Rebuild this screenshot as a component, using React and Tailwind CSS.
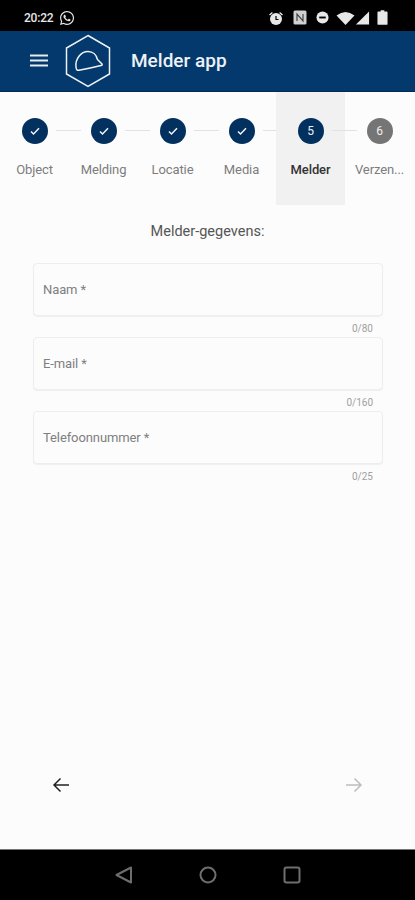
import React from "react";
import { FaWhatsapp } from "react-icons/fa";

function Check() {
  return (
    <svg width="12" height="12" viewBox="0 0 24 24" fill="none" stroke="#f2f5f8" strokeWidth="3">
      <path d="M4 13l5 5L20 6.5" />
    </svg>
  );
}

function Step({ label, state, num, active, last }) {
  return (
    <div className={`relative w-[69px] h-[113px] flex flex-col items-center pt-[26px] ${active ? "bg-[#f1f1f1]" : ""}`}>
      <div className={`w-[26px] h-[26px] rounded-full flex items-center justify-center text-[12px] text-[#f0f0f0] ${state === "todo" ? "bg-[#757575]" : "bg-[#03315f]"}`}>
        {state === "done" ? <Check /> : num}
      </div>
      {!last && <div className="absolute left-[56px] top-[38px] w-[25px] h-px bg-[#e2e2e2]" />}
      <div className={`mt-[18px] text-[13px] leading-[16px] tracking-[-0.1px] ${active ? "text-[#333333] font-medium" : "text-[#7c7c7c]"}`}>{label}</div>
    </div>
  );
}

function Field({ label, count }) {
  return (
    <div>
      <div className="h-[53px] rounded-[4px] border border-[#eeeeee] bg-[#fcfcfc] shadow-[0_1px_1px_rgba(0,0,0,0.05)] flex items-center pl-[9px] pt-[1px] text-[13px] tracking-[-0.1px] text-[#7f7f7f]">
        {label}
      </div>
      <div className="h-[21px] pr-[10px] pt-[6px] text-right text-[10px] leading-[14px] text-[#a0a0a0]">{count}</div>
    </div>
  );
}

export default function App() {
  return (
    <div className="w-[415px] h-[900px] flex flex-col bg-[#fcfcfc] overflow-hidden font-['Roboto',sans-serif]">
      <div className="h-[31px] bg-black flex items-center justify-between pl-[24px] pr-[27px] pt-[4px] text-[#e8e8e8] shrink-0">
        <div className="flex items-center gap-[6px]">
          <span className="text-[12px] font-medium tracking-[-0.2px]">20:22</span>
          <FaWhatsapp size={16} color="#e8e8e8" />
        </div>
        <div className="flex items-center gap-[7px]">
          <svg width="16" height="16" viewBox="0 0 16 16" fill="#e8e8e8" className="mr-[2px]">
            <circle cx="8" cy="9" r="6" />
            <path d="M1 4.500L4 2l.8 1L2 5.500zM15 4.500L12 2l-.8 1L14 5.500z" />
            <path d="M8 6v3.500h2.500" stroke="#000" strokeWidth="1.200" fill="none" />
          </svg>
          <svg width="14" height="15" viewBox="0 0 14 15">
            <rect x="0.500" y="0.500" width="13" height="14" rx="1.500" fill="#d0d0d0" />
            <path d="M4 11V4l6 7V4" stroke="#444" strokeWidth="1.200" fill="none" />
          </svg>
          <svg width="13" height="13" viewBox="0 0 14 14" className="ml-[2px]">
            <circle cx="7" cy="7" r="6.500" fill="#e8e8e8" />
            <rect x="3.500" y="6" width="7" height="2" fill="#000" />
          </svg>
          <div className="flex items-center">
            <svg width="19" height="14" viewBox="0 0 19 14" fill="#e8e8e8">
              <path d="M0.500 4.500Q9.500 -2.500 18.500 4.500L9.500 14z" />
            </svg>
            <svg width="15" height="14" viewBox="0 0 16 14" fill="#e8e8e8">
              <path d="M15 0v14H1z" />
            </svg>
          </div>
          <svg width="11" height="15" viewBox="0 0 12 16" fill="#e8e8e8">
            <path d="M4 0h4v1.500h2.500a1 1 0 0 1 1 1V15a1 1 0 0 1-1 1h-9a1 1 0 0 1-1-1V2.500a1 1 0 0 1 1-1H4z" />
          </svg>
        </div>
      </div>

      <div className="h-[61px] bg-[#03396c] border-b border-[#022a52] flex items-center pl-[30px] shrink-0">
        <svg width="18" height="13" viewBox="0 0 18 13" fill="#e6ebf0" className="mb-[2px]">
          <rect y="0.500" width="18" height="2" />
          <rect y="5.500" width="18" height="2" />
          <rect y="10.500" width="18" height="2" />
        </svg>
        <svg width="48" height="54" viewBox="0 0 48 54" fill="none" stroke="#eef2f6" strokeWidth="1.500" className="ml-[16px]">
          <path d="M24 1.500L45.500 14V40L24 52.500L2.500 40V14z" />
          <path d="M12 33C11 25 17 17.500 24 17.500C29 17.500 32.500 21 33.500 25.500L38 30C38.500 30.800 38 31.300 37 31.500C29 33.500 22 35 15 36.200C13 36.500 12.200 35.500 12 33z" strokeWidth="1.500" strokeLinejoin="round" />
        </svg>
        <div className="ml-[19px] text-[#eef2f6] text-[19px] font-medium">Melder app</div>
      </div>

      <div className="flex h-[113px] shrink-0">
        <Step label="Object" state="done" />
        <Step label="Melding" state="done" />
        <Step label="Locatie" state="done" />
        <Step label="Media" state="done" />
        <Step label="Melder" state="current" num="5" active />
        <Step label="Verzen..." state="todo" num="6" last />
      </div>

      <div className="mt-[16px] text-center text-[14.5px] leading-[20px] pt-[1px] h-[21px] text-[#555555]">Melder-gegevens:</div>

      <div className="mt-[21px] mx-[33px] w-[350px]">
        <Field label="Naam *" count="0/80" />
        <Field label="E-mail *" count="0/160" />
        <Field label="Telefoonnummer *" count="0/25" />
      </div>

      <div className="flex-1 flex items-end justify-between pl-[52px] pr-[52px] pb-[55px]">
        <svg width="18" height="18" viewBox="0 0 18 18" fill="none" stroke="#222222" strokeWidth="1.500">
          <path d="M17 9H2M8.500 2.500L2 9l6.500 6.500" />
        </svg>
        <svg width="18" height="18" viewBox="0 0 18 18" fill="none" stroke="#bdbdbd" strokeWidth="1.500">
          <path d="M1 9h15M9.500 2.500L16 9l-6.500 6.500" />
        </svg>
      </div>

      <div className="h-[51px] bg-black border-t border-[#777777] flex items-center justify-center gap-[66px] pl-[1px] shrink-0">
        <svg width="18" height="18" viewBox="0 0 18 18" fill="none" stroke="#6e6e6e" strokeWidth="2" strokeLinejoin="round">
          <path d="M16 1.500V16.500L1.500 9z" />
        </svg>
        <svg width="18" height="18" viewBox="0 0 18 18" fill="none" stroke="#6e6e6e" strokeWidth="2">
          <circle cx="9" cy="9" r="7.500" />
        </svg>
        <svg width="18" height="18" viewBox="0 0 18 18" fill="none" stroke="#6e6e6e" strokeWidth="2">
          <rect x="1.500" y="1.500" width="15" height="15" rx="2" />
        </svg>
      </div>
    </div>
  );
}
